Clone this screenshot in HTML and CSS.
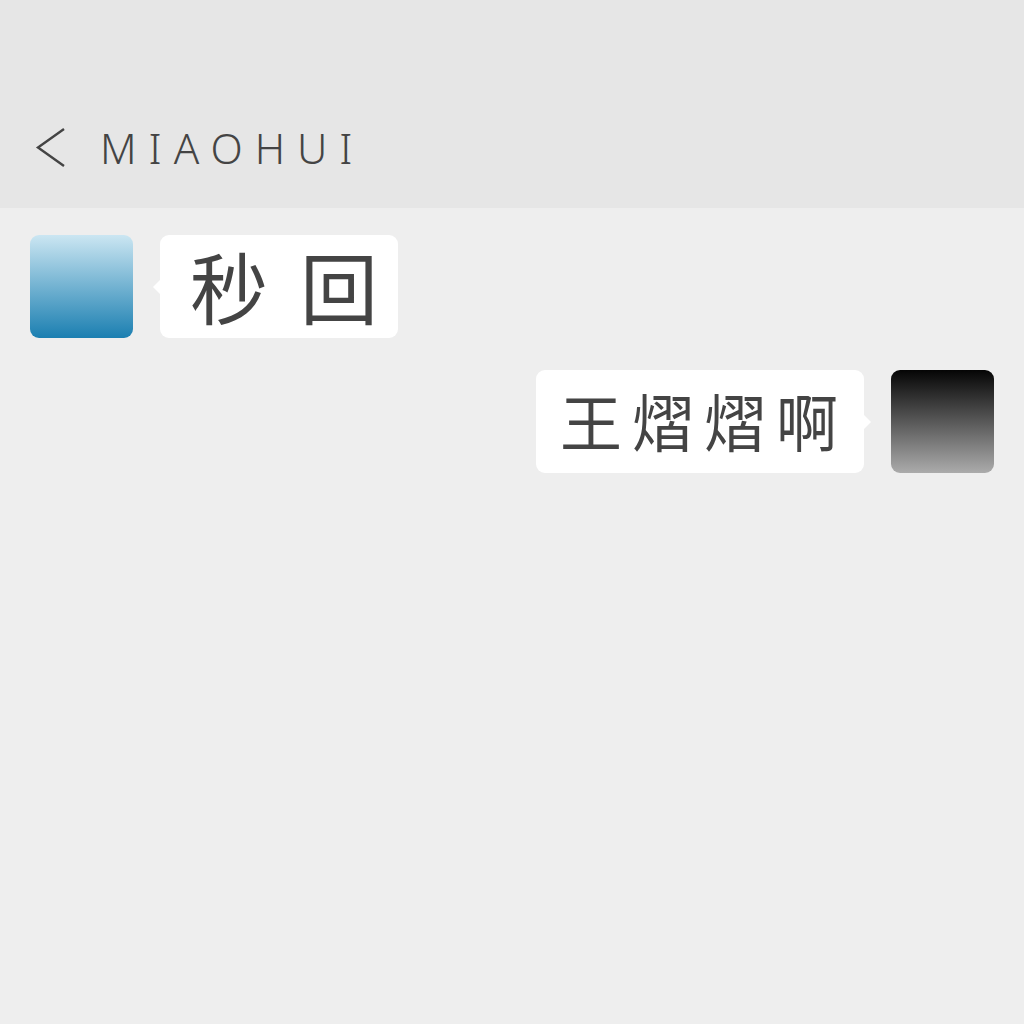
FILE: index.html
```html
<!DOCTYPE html>
<html lang="zh">
<head>
    <meta charset="UTF-8">
    <title>MIAOHUI</title>
    <link rel="stylesheet" href="styles.css">
</head>
<body>
    <header class="topbar">
        <svg class="back" width="32" height="40" viewBox="0 0 32 40">
            <polyline points="30,1 4,19.5 30,38" fill="none" stroke="#444" stroke-width="2.4" stroke-linejoin="miter"/>
        </svg>
        <span class="title">MIAOHUI</span>
    </header>

    <main class="chat">
        <div class="msg msg-left">
            <div class="avatar avatar-blue"></div>
            <div class="bubble bubble-left"><span class="bubble-text">秒回</span></div>
        </div>
        <div class="msg msg-right">
            <div class="bubble bubble-right"><span class="bubble-text">王熠熠啊</span></div>
            <div class="avatar avatar-dark"></div>
        </div>
    </main>
</body>
</html>
```

FILE: styles.css
```css
* {
    margin: 0;
    padding: 0;
    box-sizing: border-box;
}

body {
    width: 1024px;
    height: 1024px;
    background-color: #eeeeee;
    font-family: "Noto Sans", "Noto Sans CJK SC", sans-serif;
    color: #444;
    overflow: hidden;
}

.topbar {
    height: 208px;
    background-color: #e6e6e6;
    display: flex;
    align-items: center;
    padding: 88px 0 0 34px;
    gap: 34px;
}

.back {
    display: block;
    flex-shrink: 0;
}

.title {
    font-size: 42px;
    font-weight: 300;
    letter-spacing: 12px;
    line-height: 1;
    color: #444;
}

.chat {
    display: flex;
    flex-direction: column;
    gap: 32px;
    padding: 27px 30px 0 30px;
}

.msg {
    display: flex;
    align-items: flex-start;
    gap: 27px;
}

.msg-right {
    justify-content: flex-end;
}

.avatar {
    width: 103px;
    height: 103px;
    border-radius: 9px;
    flex-shrink: 0;
}

.avatar-blue {
    background: linear-gradient(to bottom, #cbe6f2, #1b7fb1);
}

.avatar-dark {
    background: linear-gradient(to bottom, #050505, #ababab);
}

.bubble {
    position: relative;
    height: 103px;
    background-color: #fff;
    border-radius: 9px;
    display: flex;
    align-items: center;
    font-family: "Noto Sans CJK SC", sans-serif;
    line-height: 1;
}

.bubble::before {
    content: "";
    position: absolute;
    top: 44px;
    border: 8px solid transparent;
}

.bubble-left {
    padding: 0 20px 4px 30px;
    font-size: 78px;
    letter-spacing: 32px;
}

.bubble-left .bubble-text {
    margin-right: -32px;
}

.bubble-left::before {
    left: -15px;
    border-right-color: #fff;
}

.bubble-right {
    padding: 0 26px 4px 24px;
    font-size: 62px;
    letter-spacing: 10px;
}

.bubble-right .bubble-text {
    margin-right: -10px;
}

.bubble-right::before {
    right: -15px;
    border-left-color: #fff;
}
```
